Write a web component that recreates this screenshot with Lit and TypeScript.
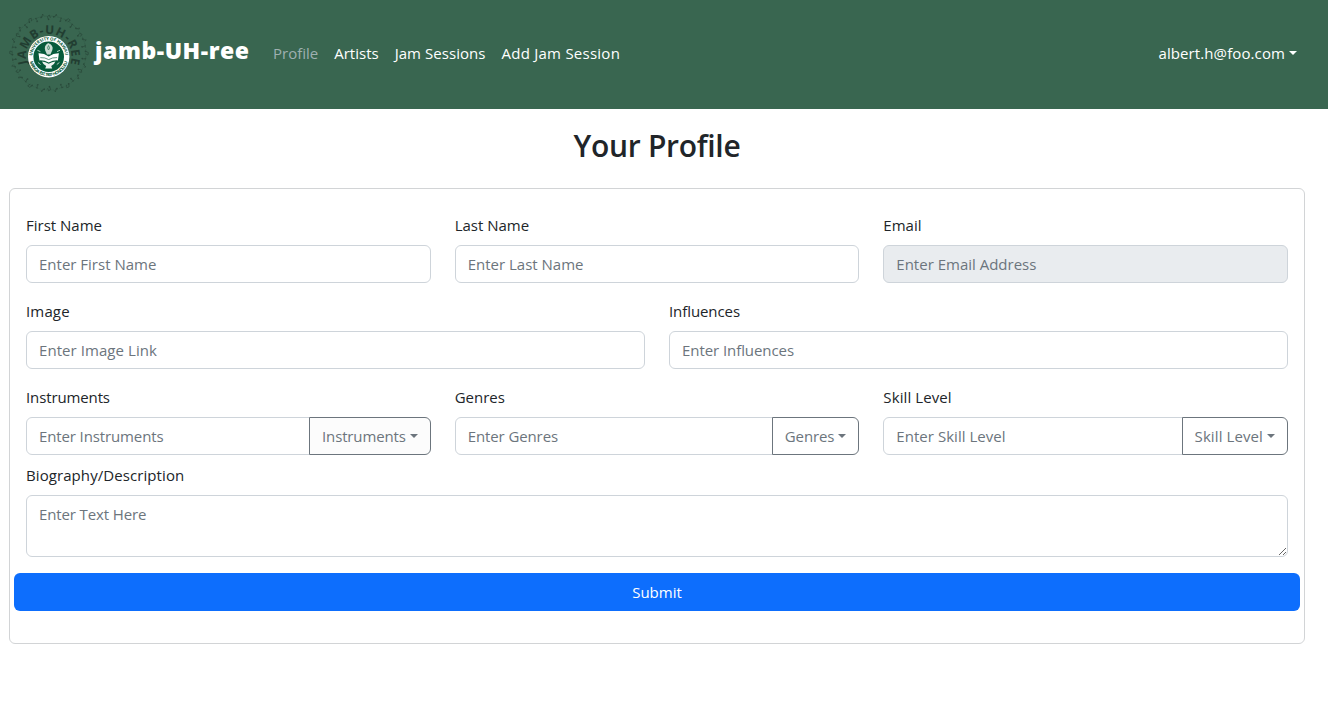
import { LitElement, html, svg, css, nothing } from "lit";
import { customElement, property } from "lit/decorators.js";
import { classMap } from "lit/directives/class-map.js";

@customElement("jam-logo")
class JamLogo extends LitElement {
  static styles = css`
    :host { display: block; width: 80px; height: 80px; }
    svg { display: block; overflow: visible; }
    text { font-family: "Open Sans", "Noto Sans", sans-serif; }
    .title { font-size: 12px; font-weight: 700; fill: #213d31; }
    .seal { font-size: 4.4px; font-weight: 700; fill: #0b5c3c; }
  `;

  private note(i: number) {
    const angle = i * 10;
    const r = i % 2 ? 37.5 : 35.5;
    const shape = i % 3 === 0 ? "M-1.2 1.5v-3l2.4-.7v3" : "M-.4 1.6v-3.6l1.4 1.2";
    return svg`<g transform="rotate(${angle} 40 40) translate(40 ${40 - r}) rotate(${i % 2 ? 25 : -20})">
      <path d=${shape} fill="none" stroke="#29493a" stroke-width=".7"/>
      <circle cx="-1" cy="1.6" r=".8" fill="#29493a"/>
    </g>`;
  }

  render() {
    return html`<svg width="80" height="80" viewBox="0 0 80 80">
      <defs>
        <path id="outer" d="M18.3 51.5A22.8 22.8 0 1 1 61.1 51.5"/>
        <path id="top" d="M23.2 43.7A16.5 16.5 0 0 1 56.2 43.7"/>
        <path id="bottom" d="M20.2 43.7A19.5 19.5 0 0 0 59.2 43.7"/>
      </defs>
      <path d="M3 40a37 37 0 1 1 74 0a37 37 0 1 1-74 0" fill="none" stroke="#29493a" stroke-width=".5" stroke-dasharray="3 1.4 1 1.2" opacity=".6"/>
      ${Array.from({ length: 36 }, (_, i) => this.note(i))}
      <text class="title"><textPath href="#outer" startOffset="1" textLength="86" lengthAdjust="spacing">JAMB-UH-REE</textPath></text>
      <circle cx="39.7" cy="43.7" r="20.7" fill="#fff"/>
      <text class="seal"><textPath href="#top" startOffset="1" textLength="49">UNIVERSITY OF HAWAII</textPath></text>
      <text class="seal"><textPath href="#bottom" startOffset="5" textLength="51">MANOA · EST. 1907 · HONOLULU</textPath></text>
      <circle cx="39.7" cy="43.7" r="15.3" fill="#075b3b"/>
      <path d="M29.5 40.2q5.4-.2 10.2 3.4q4.8-3.6 10.2-3.4l-1 7.2q-4.7-.3-9.2 2.1q-4.5-2.4-9.2-2.1z" fill="#fff"/>
      <path d="M33 48.6q3.4.2 6.7 2.1q3.3-1.9 6.7-2.1q-1 3.2-4.2 4.3l1 2.6h-7l1-2.6q-3.2-1.1-4.2-4.3z" fill="#edf4f0"/>
      <path d="M38 41.5l-1.8-4q-1.6-4.4 3-7.4q5.6 2.4 4.2 7l-2 4.4z" fill="#c9ddd2"/>
      <path d="M39.5 32.5q-2 2.4 0 4.5q2.2-1.7 0-4.5M31.3 44.6q4.6-.3 8.4 2q3.8-2.3 8.4-2" fill="none" stroke="#3f8165" stroke-width=".8"/>
      <path d="M28.4 37.3l3 1.3M51 37.3l-3 1.3M29 49.5l2.6 2M50.4 49.5l-2.6 2" stroke="#a9cbbb" stroke-width="1"/>
    </svg>`;
  }
}

@customElement("profile-field")
class ProfileField extends LitElement {
  @property() label = "";
  @property() placeholder = "";
  @property() menu = "";
  @property({ type: Boolean }) disabled = false;
  @property({ type: Boolean }) multiline = false;
  @property({ type: Boolean }) tinted = false;

  static styles = css`
    :host { display: block; min-width: 0; }
    * { box-sizing: border-box; }
    label { display: block; height: 24px; margin-bottom: 8px; line-height: 24px; color: #212529; white-space: nowrap; letter-spacing: var(--label-tracking, 0); }
    .group { display: flex; }
    .control {
      display: block; flex: 1; width: 100%; min-width: 0; height: 38px; margin: 0; padding: 6px 12px;
      border: 1px solid #ced4da; border-radius: 6px; background: #fff; color: #212529;
      font: inherit; letter-spacing: var(--hint-tracking, 0); line-height: 24px; outline: none;
    }
    .control::placeholder { color: #6c757d; opacity: 1; }
    .control:disabled { background: #e9ecef; }
    .area { height: 62px; resize: vertical; }
    .joined { border-top-right-radius: 0; border-bottom-right-radius: 0; }
    .menu {
      display: flex; align-items: center; gap: 4px; height: 38px; margin: 0 0 0 -1px; padding: 0 12px;
      border: 1px solid #6c757d; border-radius: 0 6px 6px 0; background: #fff; color: #6c757d;
      font: inherit; letter-spacing: var(--menu-tracking, 0); line-height: 24px; white-space: nowrap;
    }
    .tinted { background: #fcfcfc; }
    .caret { border: 4.8px solid transparent; border-top-color: currentColor; border-bottom: 0; width: 0; height: 0; margin-top: -1px; }
  `;

  render() {
    const classes = classMap({ control: true, joined: !!this.menu });
    return html`
      <label>${this.label}</label>
      <div class="group">
        ${this.multiline
          ? html`<textarea class="control area" placeholder=${this.placeholder}></textarea>`
          : html`<input class=${classes} placeholder=${this.placeholder} ?disabled=${this.disabled} />`}
        ${this.menu
          ? html`<button class=${classMap({ menu: true, tinted: this.tinted })}>${this.menu}<span class="caret"></span></button>`
          : nothing}
      </div>`;
  }
}

@customElement("app-root")
class AppRoot extends LitElement {
  static styles = css`
    :host {
      display: block; height: 721px; overflow: hidden; background: #fff; color: #212529;
      font: 15px/24px "Open Sans", "Noto Sans", sans-serif;
    }
    * { box-sizing: border-box; }
    .navbar { display: flex; align-items: center; height: 109px; padding: 0 31px 0 9px; background: #396650; color: #fff; }
    .brand { margin: 0 24px 10px 6px; width: 154px; font-size: 23px; line-height: 30px; font-weight: 800; letter-spacing: .55px; white-space: nowrap; }
    .logo { margin-bottom: 3px; }
    .links { display: flex; gap: 16px; margin-bottom: 3px; white-space: nowrap; }
    .active { color: #9fb0b0; }
    .sessions { letter-spacing: .05px; }
    .add { letter-spacing: .25px; }
    .user { display: flex; align-items: center; gap: 4px; margin: 0 0 3px auto; letter-spacing: .1px; }
    .caret { border: 4.8px solid transparent; border-top-color: currentColor; border-bottom: 0; width: 0; height: 0; margin-top: -1px; }
    .page { width: 1296px; margin-left: 9px; }
    h2 { margin: 0; padding-top: 18px; height: 79px; font-size: 30px; line-height: 38px; font-weight: 600; letter-spacing: -.3px; text-align: center; }
    .card { height: 456px; padding: 24px 4px 0; border: 1px solid #d2d4d6; border-radius: 6px; }
    .rows { display: grid; gap: 16px; padding: 0 12px; }
    .row { display: grid; gap: 24px; }
    .three { grid-template-columns: repeat(3, minmax(0, 1fr)); }
    .two { grid-template-columns: repeat(2, minmax(0, 1fr)); }
    .image { --label-tracking: .15px; --hint-tracking: .07px; }
    .influences { --label-tracking: -.08px; --hint-tracking: -.07px; }
    .instruments { --label-tracking: -.12px; --hint-tracking: -.12px; --menu-tracking: -.15px; }
    .genres { --hint-tracking: -.1px; --menu-tracking: -.12px; }
    .skill { --label-tracking: .1px; --hint-tracking: .04px; --menu-tracking: .1px; }
    .bio { margin-top: -8px; --label-tracking: .08px; --hint-tracking: -.12px; }
    .submit { display: block; width: 100%; height: 38px; margin-top: 16px; border: 0; border-radius: 6px; background: #0d6efd; color: #fff; font: inherit; }
  `;

  render() {
    return html`
      <nav class="navbar">
        <jam-logo class="logo"></jam-logo>
        <div class="brand">jamb-UH-ree</div>
        <div class="links">
          <span class="active">Profile</span><span>Artists</span><span class="sessions">Jam Sessions</span><span class="add">Add Jam Session</span>
        </div>
        <div class="user">albert.h@foo.com<span class="caret"></span></div>
      </nav>
      <main class="page">
        <h2>Your Profile</h2>
        <section class="card">
          <div class="rows">
            <div class="row three">
              <profile-field label="First Name" placeholder="Enter First Name"></profile-field>
              <profile-field label="Last Name" placeholder="Enter Last Name"></profile-field>
              <profile-field label="Email" placeholder="Enter Email Address" disabled></profile-field>
            </div>
            <div class="row two">
              <profile-field class="image" label="Image" placeholder="Enter Image Link"></profile-field>
              <profile-field class="influences" label="Influences" placeholder="Enter Influences"></profile-field>
            </div>
            <div class="row three">
              <profile-field class="instruments" label="Instruments" placeholder="Enter Instruments" menu="Instruments" tinted></profile-field>
              <profile-field class="genres" label="Genres" placeholder="Enter Genres" menu="Genres"></profile-field>
              <profile-field class="skill" label="Skill Level" placeholder="Enter Skill Level" menu="Skill Level"></profile-field>
            </div>
            <profile-field class="bio" label="Biography/Description" placeholder="Enter Text Here" multiline></profile-field>
          </div>
          <button class="submit">Submit</button>
        </section>
      </main>`;
  }
}
